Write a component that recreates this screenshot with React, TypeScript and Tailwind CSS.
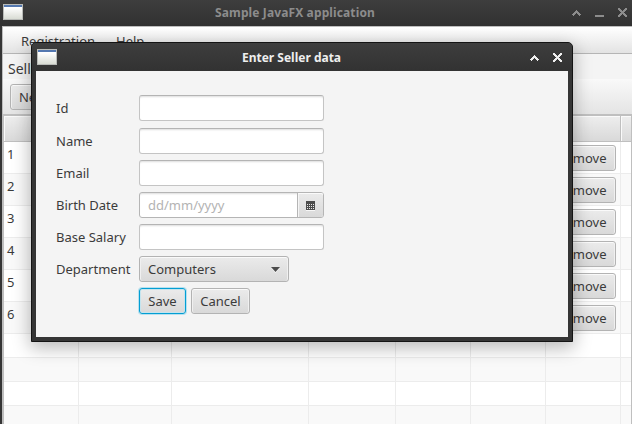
import type { ReactNode } from 'react';

const columns = 'grid grid-cols-[75px_93px_137px_87px_75px_75px_75px_10px]';

function WindowIcon() {
  return (
    <svg width="20" height="16" viewBox="0 0 20 16" shapeRendering="crispEdges">
      <defs>
        <linearGradient id="pane" x1="0" y1="0" x2="0" y2="1">
          <stop offset="0.2" stopColor="#ffffff" />
          <stop offset="1" stopColor="#d9dcd4" />
        </linearGradient>
      </defs>
      <rect width="20" height="16" fill="#b9bbb8" />
      <rect x="1" y="1" width="18" height="14" fill="url(#pane)" />
      <rect x="1" y="1" width="18" height="2" fill="#5478b0" />
    </svg>
  );
}

function ChevronGlyph() {
  return (
    <svg width="9" height="9" viewBox="0 0 9 9" fill="currentColor" shapeRendering="crispEdges">
      <path d="M4 2h1v1h1v1h1v1h1v1h1v1h-1v1h-1v-1h-1v-1h-1v-1h-1v1h-1v1h-1v1h-1v-1h-1v-1h1v-1h1v-1h1v-1h1z" />
    </svg>
  );
}

function MinimizeGlyph() {
  return (
    <svg width="9" height="9" viewBox="0 0 9 9" shapeRendering="crispEdges">
      <rect y="7" width="9" height="2" fill="currentColor" />
    </svg>
  );
}

function CloseGlyph() {
  return (
    <svg width="9" height="9" viewBox="0 0 9 9" fill="currentColor" shapeRendering="crispEdges">
      <path d="M0 0h2v1h1v1h1v1h1v-1h1v-1h1v-1h2v2h-1v1h-1v1h-1v1h1v1h1v1h1v2h-2v-1h-1v-1h-1v-1h-1v1h-1v1h-1v1h-2v-2h1v-1h1v-1h1v-1h-1v-1h-1v-1h-1z" />
    </svg>
  );
}

function Button({ children, focused = false, className = '' }: { children: ReactNode; focused?: boolean; className?: string }) {
  return (
    <button
      className={`flex h-[26px] shrink-0 items-center justify-center rounded-[3px] border bg-linear-to-b from-[#ebebeb] to-[#d9d9d9] ${
        focused
          ? 'border-[#039ed3] shadow-[inset_0_0_0_1px_#c5e4ee,0_0_0_1px_#b7e0ee]'
          : 'border-[#b3b3b3] shadow-[inset_0_1px_0_#fafafa,inset_1px_0_0_#f0f0f0,inset_-1px_0_0_#f0f0f0]'
      } ${className}`}
    >
      {children}
    </button>
  );
}

function TextField({ label }: { label: string }) {
  return (
    <input
      aria-label={label}
      className="block h-[26px] w-[185px] rounded-[3px] border border-[#c4c4c4] border-t-[#b4b4b4] bg-white shadow-[inset_0_2px_2px_-1px_#dddddd]"
    />
  );
}

function DateField() {
  return (
    <div className="flex h-[26px] w-[185px] rounded-[3px] border border-[#b5b5b5] bg-white shadow-[inset_0_2px_2px_-1px_#dddddd]">
      <span className="flex-1 pl-2 leading-[25px] text-[#b3b3b3]">dd/mm/yyyy</span>
      <div className="flex w-[26px] items-center justify-center rounded-r-[2px] border-l border-[#b5b5b5] bg-linear-to-b from-[#ebebeb] to-[#d9d9d9] pt-[2px] shadow-[inset_0_1px_0_#fafafa,inset_1px_0_0_#f5f5f5]">
        <svg width="9" height="10" viewBox="0 0 9 10" shapeRendering="crispEdges">
          <rect width="9" height="9" fill="#4c4c4c" />
          <rect y="9" width="9" height="1" fill="#f7f7f7" />
          {[3, 5, 7].map((y) => [1, 3, 5, 7].map((x) => <rect key={`${x}-${y}`} x={x} y={y} width="1" height="1" fill="#e6e6e6" />))}
        </svg>
      </div>
    </div>
  );
}

function DepartmentSelect() {
  return (
    <Button className="w-[150px] justify-between! pr-[8px] pl-[8px]">
      <span>Computers</span>
      <svg className="mt-px" width="9" height="6" viewBox="0 0 9 6">
        <path d="M0 1 H9 L4.5 6 Z" fill="#f5f5f5" />
        <path d="M0 0 H9 L4.5 5 Z" fill="#4c4c4c" />
      </svg>
    </Button>
  );
}

function FormRow({ label, children }: { label: string; children?: ReactNode }) {
  return (
    <div className="flex h-[26px] items-center">
      <span className="w-[83px] whitespace-nowrap">{label}</span>
      {children}
    </div>
  );
}

function SellerDialog() {
  return (
    <div className="absolute top-[42px] left-[31px] flex h-[300px] w-[542px] flex-col rounded-t-[5px] border border-[#141414] bg-[#353535] px-1 pb-1 shadow-[0_5px_18px_1px_rgba(0,0,0,0.28)]">
      <div className="-mx-1 flex h-[28px] shrink-0 items-center rounded-t-[4px] bg-linear-to-b from-[#3e3e3e] to-[#323232] px-[5px] text-[#eeeeee]">
        <WindowIcon />
        <span className="flex-1 pt-px pr-[4px] text-center text-[12px] font-bold">Enter Seller data</span>
        <div className="flex items-center gap-[14px] pt-px pr-[5px]">
          <ChevronGlyph />
          <CloseGlyph />
        </div>
      </div>
      <div className="flex flex-1 flex-col gap-[6px] bg-[#f4f4f4] pt-[24px] pl-[20px]">
        <div className="mb-px">
          <FormRow label="Id"><TextField label="Id" /></FormRow>
        </div>
        <FormRow label="Name"><TextField label="Name" /></FormRow>
        <FormRow label="Email"><TextField label="Email" /></FormRow>
        <FormRow label="Birth Date"><DateField /></FormRow>
        <FormRow label="Base Salary"><TextField label="Base Salary" /></FormRow>
        <FormRow label="Department"><DepartmentSelect /></FormRow>
        <FormRow label="">
          <Button focused className="w-[47px]">Save</Button>
          <Button className="ml-[5px] w-[59px]">Cancel</Button>
        </FormRow>
      </div>
    </div>
  );
}

function TableRow({ id, shaded }: { id?: number; shaded: boolean }) {
  return (
    <div className={`${columns} ${id ? 'h-8' : 'h-6'} shrink-0 ${shaded ? 'bg-[#f9f9f9]' : 'bg-white'}`}>
      <div className="border-r border-b border-[#ececec] pt-[3px] pl-[3px]">{id}</div>
      {[1, 2, 3, 4, 5].map((column) => (
        <div key={column} className="border-r border-b border-[#ececec]" />
      ))}
      <div className="flex justify-end border-r border-b border-[#ececec] pt-[3px] pr-1">
        {id && <Button className="w-[69px] pl-px">Remove</Button>}
      </div>
      <div className="border-b border-[#ececec]" />
    </div>
  );
}

export default function App() {
  return (
    <div className="relative flex h-[424px] w-[632px] flex-col overflow-hidden bg-[#353535] font-['Noto_Sans','Open_Sans',sans-serif] text-[13px] leading-[18px] text-[#3b3b3b]">
      <header className="flex h-[26px] shrink-0 items-center bg-linear-to-b from-[#3e3e3e] to-[#313131] pr-[5px] pl-[3px] text-[#8c8c8c]">
        <div className="-mt-[2px] flex"><WindowIcon /></div>
        <span className="flex-1 pr-[5px] text-center text-[12px] font-bold tracking-[0.12px]">Sample JavaFX application</span>
        <div className="-mt-px flex items-center gap-[14px]">
          <ChevronGlyph />
          <MinimizeGlyph />
          <CloseGlyph />
        </div>
      </header>
      <main className="ml-[2px] flex min-h-0 flex-1 flex-col border-t border-l border-[#bdbdbd] bg-[#f4f4f4]">
        <nav className="flex h-[27px] shrink-0 items-center gap-[21px] border-b border-[#b5b5b5] bg-linear-to-b from-white to-[#e3e3e3] pt-[2px] pl-[18px]">
          <span>Registration</span>
          <span>Help</span>
        </nav>
        <div className="h-[25px] shrink-0 pt-[6px] pl-[5px] text-[14px]">Seller</div>
        <div className="h-[35px] shrink-0 bg-linear-to-b from-[#f9f9f9] to-[#e4e4e4] pt-[5px] pl-[7px]">
          <Button className="w-[45px]">New</Button>
        </div>
        <section className="flex min-h-0 flex-1 flex-col border-t-2 border-r border-l border-[#bfbfbf]">
          <div className={`${columns} h-[26px] shrink-0 border-b border-[#bfbfbf] bg-linear-to-b from-[#eeeeee] to-[#d9d9d9]`}>
            {[0, 1, 2, 3, 4, 5, 6].map((column) => (
              <div key={column} className="border-r border-[#bfbfbf] shadow-[inset_1px_1px_0_#fafafa]" />
            ))}
            <div className="shadow-[inset_1px_1px_0_#fafafa]" />
          </div>
          {[1, 2, 3, 4, 5, 6].map((id) => (
            <TableRow key={id} id={id} shaded={id % 2 === 0} />
          ))}
          {[0, 1, 2, 3].map((row) => (
            <TableRow key={row} shaded={row % 2 === 1} />
          ))}
        </section>
      </main>
      <SellerDialog />
    </div>
  );
}
